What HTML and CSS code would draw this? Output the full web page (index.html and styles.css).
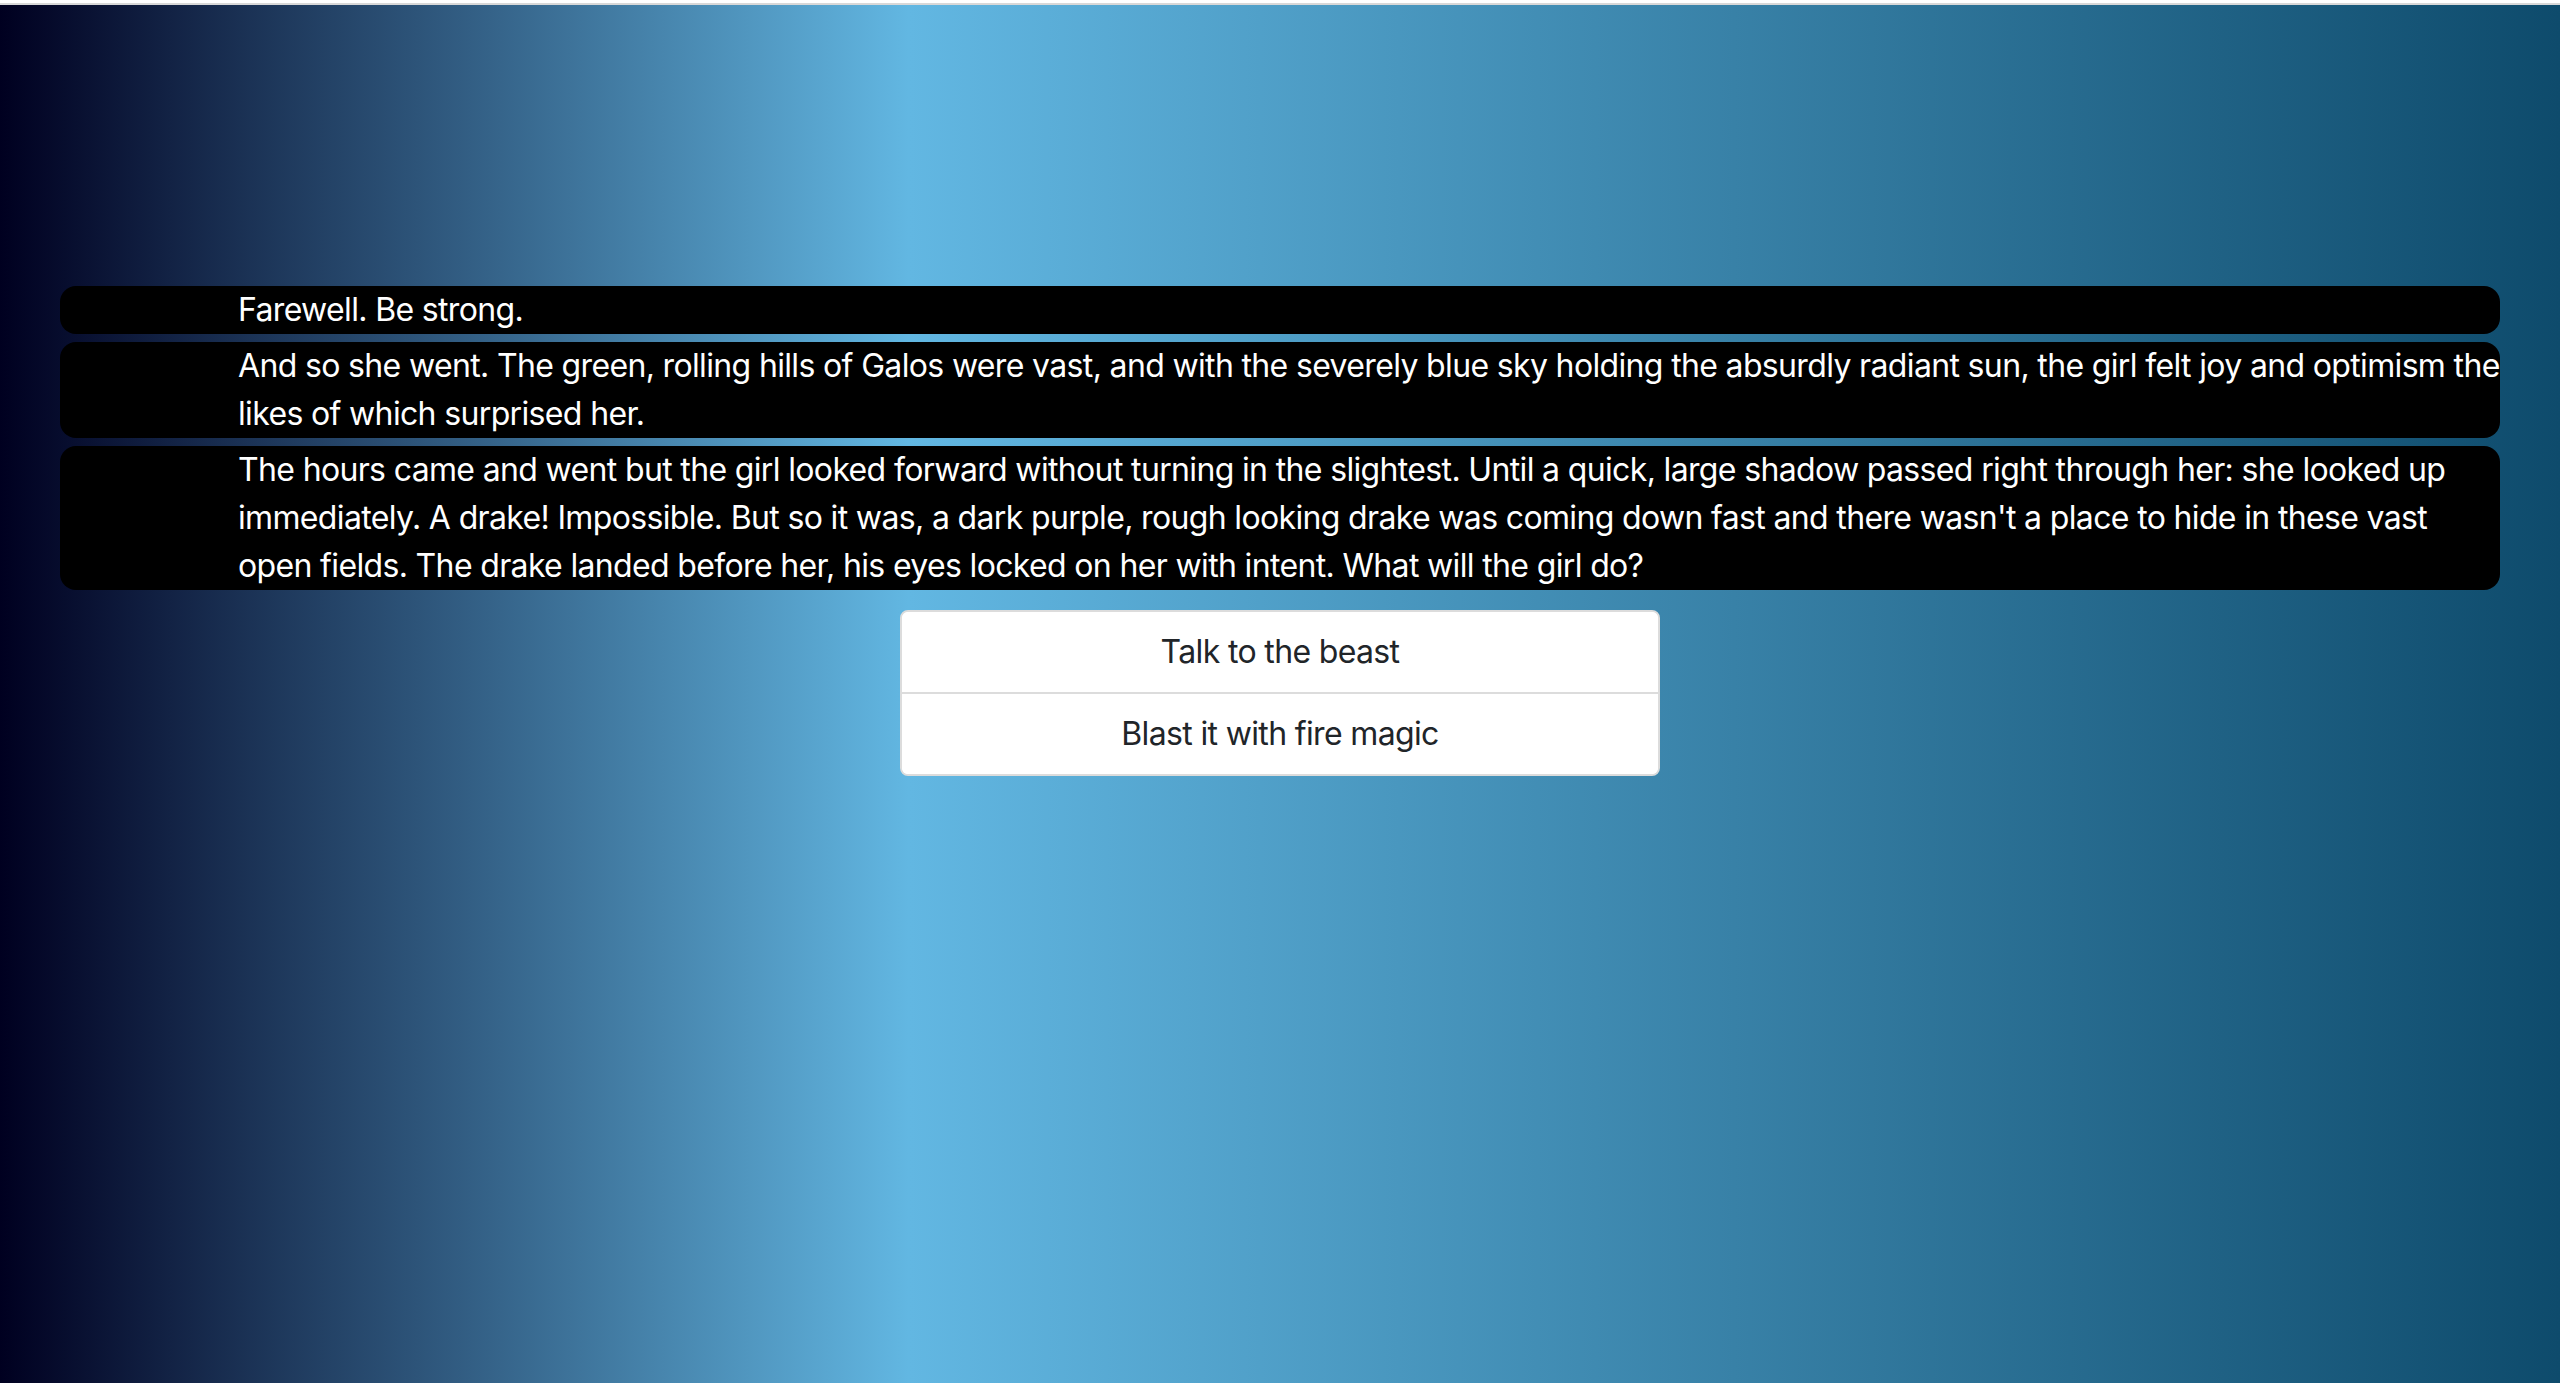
FILE: index.html
```html
<!DOCTYPE html>
<html lang="en">
<head>
<meta charset="utf-8">
<title>Story</title>
<link rel="stylesheet" href="styles.css">
</head>
<body>
<div class="topline"></div>
<main class="stage">
  <section class="story">
    <p class="passage">Farewell. Be strong.</p>
    <p class="passage">And so she went. The green, rolling hills of Galos were vast, and with the severely blue sky holding the absurdly radiant sun, the girl felt joy and optimism the likes of which surprised her.</p>
    <p class="passage">The hours came and went but the girl looked forward without turning in the slightest. Until a quick, large shadow passed right through her: she looked up immediately. A drake! Impossible. But so it was, a dark purple, rough looking drake was coming down fast and there wasn't a place to hide in these vast open fields. The drake landed before her, his eyes locked on her with intent. What will the girl do?</p>
  </section>
  <div class="choices">
    <button class="choice">Talk to the beast</button>
    <button class="choice">Blast it with fire magic</button>
  </div>
</main>
</body>
</html>
```
FILE: styles.css
```css
html, body {
  margin: 0;
  padding: 0;
  height: 100%;
}
body {
  font-family: Inter, "Noto Sans", "Liberation Sans", sans-serif;
  font-size: 32px;
  line-height: 48px;
  letter-spacing: -0.65px;
  color: #fff;
  background: linear-gradient(to right, #000020 0%, #62b7e2 35.5%, #0e4b6c 100%);
  min-height: 1383px;
  box-sizing: border-box;
}
.topline {
  height: 5px;
  box-sizing: border-box;
  border-top: 3px solid #ffffff;
  background: #d8d8d8;
}
.stage {
  padding-top: 281px;
}
.story {
  margin: 0 60px 0 60px;
  display: flex;
  flex-direction: column;
  gap: 8px;
}
.passage {
  margin: 0;
  background: #000;
  border-radius: 16px;
  padding: 0 0 0 178px;
}
.choices {
  box-sizing: border-box;
  width: 760px;
  margin: 20px auto 0;
  display: flex;
  flex-direction: column;
  background: #fff;
  border: 2px solid #dcdcdc;
  border-radius: 8px;
  overflow: hidden;
}
.choice {
  font: inherit;
  letter-spacing: inherit;
  color: #212529;
  background: #fff;
  border: 0;
  padding: 16px 32px;
  line-height: 48px;
  text-align: center;
}
.choice + .choice {
  border-top: 2px solid #dcdcdc;
}
```
